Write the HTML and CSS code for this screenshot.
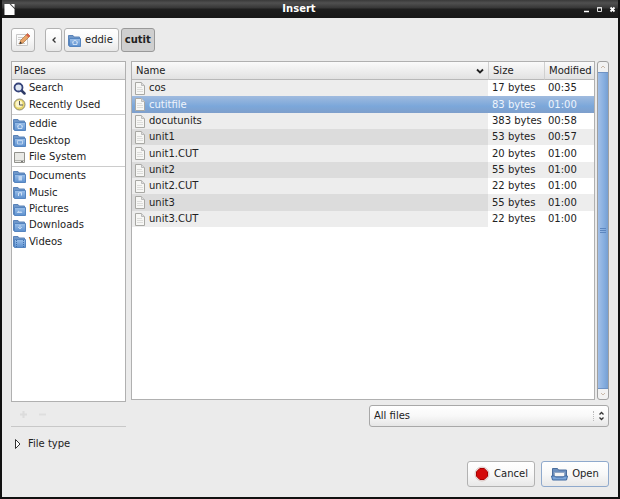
FILE: index.html
```html
<!DOCTYPE html>
<html lang="en">
<head>
    <meta charset="UTF-8">
    <meta name="viewport" content="width=device-width, initial-scale=1.0">
    <title>Insert</title>
    <link rel="stylesheet" href="styles.css">
</head>
<body>
    <!-- Shared icons -->
    <svg class="icon-defs" aria-hidden="true">
        <linearGradient id="blue" x1="0" y1="0" x2="0" y2="1">
            <stop offset="0" stop-color="#9cc0ea"/>
            <stop offset="1" stop-color="#5b8fce"/>
        </linearGradient>
        <symbol id="folder" viewBox="0 0 13 13">
            <path d="M.5 11.500v-10h4.500l1 1.500h5.500v8.500z" fill="#6f97c9" stroke="#5a83b8"/>
            <path d="M1.500 4.500h11v8h-11z" fill="url(#blue)" stroke="#5585c0"/>
        </symbol>
        <symbol id="file" viewBox="0 0 12 13">
            <path d="M1.500.5h6l3 3v9h-9z" fill="#f7f7f5" stroke="#a8a8a4"/>
            <path d="M7.500.5v3h3" fill="#ddd" stroke="#bbb"/>
            <path d="M3 5.500h5M3 7.500h6M3 9.500h6" stroke="#dcdcda"/>
        </symbol>
    </svg>

    <div class="window">
        <header class="titlebar">
            <svg class="app-icon" viewBox="0 0 12 13" aria-hidden="true"><path d="M.5.5H6L11.500 6v6.500H.5z" fill="#fff"/><path d="M7.500.5h4V4.500z" fill="#fff"/></svg>
            <h1>Insert</h1>
            <div class="window-controls">
                <button aria-label="Minimize"><svg viewBox="0 0 7 7"><path d="M1 5.500h5" stroke="#fff" stroke-width="1.500"/></svg></button>
                <button aria-label="Maximize"><svg viewBox="0 0 7 7"><path d="M1.500 1.500h4v4h-4zM1 2h5" fill="none" stroke="#ddd"/></svg></button>
                <button aria-label="Close"><svg viewBox="0 0 7 7"><path d="M1.500 1.500l4 4M5.500 1.500l-4 4" stroke="#fff" stroke-width="1.800"/></svg></button>
            </div>
        </header>

        <main>
            <nav class="toolbar" aria-label="Path">
                <button class="btn btn-edit" aria-label="Type a file name">
                    <svg viewBox="0 0 16 16">
                        <path d="M1.500 2.500h11v11h-11z" fill="#fafafa" stroke="#c8c8c8"/>
                        <path d="M3 5.500h5M3 7.500h4M3 11.500h7" stroke="#ccc"/>
                        <path d="M4.500 12l1-3.500 7-7 2.500 2.500-7 7z" fill="#e8a468" stroke="#a8703c" stroke-width=".7"/>
                        <path d="M11 3l1.500-1.500L15 4l-1.500 1.500z" fill="#d6604c"/>
                        <path d="M4.500 12l.8-2.500 1.700 1.700z" fill="#333"/>
                    </svg>
                </button>
                <button class="btn btn-back" aria-label="Back"><svg viewBox="0 0 6 8"><path d="M4.500 1.500L2 4l2.500 2.500" fill="none" stroke="#333" stroke-width="1.300"/></svg></button>
                <button class="btn btn-path">
                    <svg viewBox="0 0 13 13"><use href="#folder"/><path d="M4 8.500l3-2.500 3 2.500M5 8v2.500h4V8" fill="none" stroke="#d5e4f6" stroke-width=".9"/></svg>
                    eddie
                </button>
                <button class="btn btn-path current">cutit</button>
            </nav>

            <div class="panes">
                <section class="side">
                    <div class="places">
                        <h2>Places</h2>
                        <ul>
                            <li><button><svg viewBox="0 0 13 13"><path d="M8.500 8.500l3 3" stroke="#2d3a66" stroke-width="2.500" stroke-linecap="round"/><circle cx="5.500" cy="5.500" r="4" fill="#dfe7f3" stroke="#35437a" stroke-width="1.800"/></svg>Search</button></li>
                            <li><button><svg viewBox="0 0 13 13"><circle cx="6.500" cy="6.500" r="5.500" fill="#e8d66a" stroke="#8d8a72"/><circle cx="6" cy="6" r="3.500" fill="#fbf5cd"/><path d="M6.500 3v4H10" fill="none" stroke="#555"/></svg>Recently Used</button></li>
                        </ul>
                        <ul>
                            <li><button><svg viewBox="0 0 13 13"><use href="#folder"/><path d="M4 8.500l3-2.500 3 2.500M5 8v2.500h4V8" fill="none" stroke="#d5e4f6" stroke-width=".9"/></svg>eddie</button></li>
                            <li><button><svg viewBox="0 0 13 13"><use href="#folder"/><path d="M4.500 6.500h5v3.500h-5z" fill="none" stroke="#c4d9f2" stroke-width=".9"/></svg>Desktop</button></li>
                            <li><button><svg viewBox="0 0 13 13"><path d="M1.500 1.500h10v10h-10z" fill="#e9e9e5" stroke="#92928c"/><path d="M2 9.500h9" stroke="#b5b5b0"/><path d="M8 10.500h2" stroke="#777"/></svg>File System</button></li>
                        </ul>
                        <ul>
                            <li><button><svg viewBox="0 0 13 13"><use href="#folder"/><path d="M5.500 6h3.500v4.500H5.500z" fill="#c0d7f2"/></svg>Documents</button></li>
                            <li><button><svg viewBox="0 0 13 13"><use href="#folder"/><path d="M5.500 10V7l3-.5V9.500" fill="none" stroke="#d0e1f5"/></svg>Music</button></li>
                            <li><button><svg viewBox="0 0 13 13"><use href="#folder"/><path d="M3.500 10l2-2.500 1.500 1.500 1-1 1.500 2z" fill="#c4d9f2"/></svg>Pictures</button></li>
                            <li><button><svg viewBox="0 0 13 13"><use href="#folder"/><path d="M7 6v3M5 8l2 2 2-2" fill="none" stroke="#c0d7f2"/></svg>Downloads</button></li>
                            <li><button><svg viewBox="0 0 13 13"><use href="#folder"/><path d="M3.500 5v7M10.500 5v7" stroke="#3e70ad" stroke-dasharray="1 1"/></svg>Videos</button></li>
                        </ul>
                    </div>
                    <div class="place-actions">
                        <button aria-label="Add bookmark" disabled><svg viewBox="0 0 9 9"><path d="M4.500 1v7M1 4.500h7" stroke="#dcdcdc" stroke-width="2"/></svg></button>
                        <button aria-label="Remove bookmark" disabled><svg viewBox="0 0 9 9"><path d="M1 4.500h7" stroke="#dedede" stroke-width="2"/></svg></button>
                    </div>
                </section>

                <section class="browser">
                    <div class="listing">
                        <div class="files">
                            <table>
                                <thead>
                                    <tr>
                                        <th class="name" aria-sort="ascending"><button>Name<svg viewBox="0 0 8 6"><path d="M1 1.500l3 3 3-3" fill="none" stroke="#222" stroke-width="1.800"/></svg></button></th>
                                        <th class="size">Size</th>
                                        <th class="modified">Modified</th>
                                    </tr>
                                </thead>
                                <tbody>
                                    <tr><td><svg><use href="#file"/></svg>cos</td><td>17 bytes</td><td>00:35</td></tr>
                                    <tr class="selected"><td><svg><use href="#file"/></svg>cutitfile</td><td>83 bytes</td><td>01:00</td></tr>
                                    <tr><td><svg><use href="#file"/></svg>docutunits</td><td>383 bytes</td><td>00:58</td></tr>
                                    <tr><td><svg><use href="#file"/></svg>unit1</td><td>53 bytes</td><td>00:57</td></tr>
                                    <tr><td><svg><use href="#file"/></svg>unit1.CUT</td><td>20 bytes</td><td>01:00</td></tr>
                                    <tr><td><svg><use href="#file"/></svg>unit2</td><td>55 bytes</td><td>01:00</td></tr>
                                    <tr><td><svg><use href="#file"/></svg>unit2.CUT</td><td>22 bytes</td><td>01:00</td></tr>
                                    <tr><td><svg><use href="#file"/></svg>unit3</td><td>55 bytes</td><td>01:00</td></tr>
                                    <tr><td><svg><use href="#file"/></svg>unit3.CUT</td><td>22 bytes</td><td>01:00</td></tr>
                                </tbody>
                            </table>
                        </div>
                        <div class="scrollbar">
                            <button aria-label="Scroll up"><svg viewBox="0 0 6 4"><path d="M1 3l2-2 2 2" fill="none" stroke="#c9b8a8"/></svg></button>
                            <div class="thumb"><svg viewBox="0 0 6 7"><path d="M0 1.500h6M0 3.500h6M0 5.500h6" stroke="#5c86bf"/></svg></div>
                            <button aria-label="Scroll down"><svg viewBox="0 0 6 4"><path d="M1 1l2 2 2-2" fill="none" stroke="#c9b8a8"/></svg></button>
                        </div>
                    </div>
                    <div class="filter">
                        <select aria-label="File filter">
                            <option>All files</option>
                        </select>
                        <svg viewBox="0 0 6 10" aria-hidden="true"><path d="M1 3.500l2-2 2 2M1 6.500l2 2 2-2" fill="none" stroke="#333" stroke-width="1.300"/></svg>
                    </div>
                </section>
            </div>

            <button class="expander" aria-expanded="false"><svg viewBox="0 0 8 12"><path d="M1.500 1.500L6 6l-4.500 4.500z" fill="#fff" stroke="#333"/></svg>File type</button>

            <footer>
                <button class="btn">
                    <svg viewBox="0 0 16 16"><circle cx="8" cy="8" r="7" fill="#f6e4e2" stroke="#d8c4c2"/><path d="M5.800 2.500h4.400l3.300 3.300v4.400l-3.300 3.300H5.800l-3.300-3.300V5.800z" fill="#d40a0a" stroke="#a80000"/></svg>
                    Cancel
                </button>
                <button class="btn btn-default">
                    <svg class="open-icon" viewBox="0 0 17 14"><path d="M1.500 12V1.500h5l1 1.500h8v9z" fill="#6c8fbe" stroke="#4a6d9c"/><path d="M3.500 5.500h10v4h-10z" fill="#f4f4f4" stroke="#93a8c4"/><path d="M.5 9h3l1 1h8l1-1h3l-1 4h-14z" fill="#7ba5d8" stroke="#3f69a0"/></svg>
                    Open
                </button>
            </footer>
        </main>
    </div>
</body>
</html>
```
FILE: styles.css
```css
* {
    box-sizing: border-box;
}

body {
    margin: 0;
    font-family: "DejaVu Sans", Verdana, sans-serif;
    font-size: 10px;
    line-height: 16px;
    color: #222;
}

button,
select {
    font: inherit;
    color: inherit;
    margin: 0;
    padding: 0;
    border: none;
    background: none;
}

svg {
    flex: none;
}

.icon-defs {
    display: block;
    width: 0;
    height: 0;
}

.window {
    display: flex;
    flex-direction: column;
    min-height: 100vh;
    border: 2px solid #111;
    border-top: none;
    background-color: #ebebeb;
}

/* Title bar */
.titlebar {
    display: flex;
    align-items: center;
    height: 18px;
    padding: 0 2px;
    background: linear-gradient(#3a3a3a 0, #505050 3px, #363636 8px, #1e1e1e 9px, #181818 100%);
    color: #fff;
}

.titlebar h1 {
    flex: 1;
    margin: 0;
    font-size: 10px;
    line-height: 16px;
    text-align: center;
}

.app-icon {
    width: 11px;
    height: 13px;
}

.window-controls {
    display: flex;
    gap: 6px;
}

.window-controls button,
.window-controls svg {
    display: block;
    width: 7px;
    height: 7px;
}

main {
    flex: 1;
    display: flex;
    flex-direction: column;
    padding: 10px 9px;
}

/* Buttons */
.btn {
    display: flex;
    align-items: center;
    justify-content: center;
    gap: 4px;
    height: 26px;
    border: 1px solid #b2b2b2;
    border-radius: 3px;
    background: linear-gradient(#fff, #f8f8f8 50%, #e8e8e8);
}

.toolbar {
    display: flex;
    gap: 2px;
    margin-bottom: 9px;
}

.toolbar .btn {
    height: 24px;
}

.btn-edit {
    width: 24px;
    margin-right: 8px;
}

.btn-edit svg {
    width: 16px;
    height: 16px;
}

.btn-back {
    width: 17px;
}

.btn-back svg {
    width: 6px;
    height: 8px;
}

.btn-path {
    padding: 0 5px 0 3px;
}

.btn-path svg {
    width: 13px;
    height: 13px;
}

.toolbar .current {
    padding: 0 3px;
    border-color: #999;
    background: #cfcfcf;
    font-weight: bold;
}

/* Panes */
.panes {
    flex: 1;
    display: flex;
    gap: 5px;
}

.side {
    width: 115px;
    display: flex;
    flex-direction: column;
    border-bottom: 1px solid #c8c8c8;
}

.places,
.files {
    flex: 1;
    border: 1px solid #b0b0b0;
    background-color: #fff;
}

.places h2,
th {
    height: 18px;
    border-bottom: 1px solid #b8b8b8;
    background: linear-gradient(#fafafa, #e2e2e2);
    font-size: 10px;
    font-weight: normal;
    line-height: 17px;
}

.places h2 {
    margin: 0;
    padding-left: 2px;
}

.places ul {
    margin: 0;
    padding: 0;
    list-style: none;
}

.places ul + ul {
    margin-top: 1px;
    padding-top: 1px;
    border-top: 1px solid #ccc;
}

.places button {
    display: flex;
    align-items: center;
    gap: 3px;
    width: 100%;
    padding-left: 1px;
    white-space: nowrap;
}

.places svg {
    width: 13px;
    height: 13px;
}

.places li:nth-child(3n+2) button {
    height: 17px;
}

.place-actions {
    display: flex;
    align-items: center;
    gap: 10px;
    height: 24px;
    padding-left: 8px;
}

.place-actions svg {
    display: block;
    width: 9px;
    height: 9px;
}

.browser {
    flex: 1;
    display: flex;
    flex-direction: column;
    gap: 5px;
}

.listing {
    flex: 1;
    display: flex;
    gap: 2px;
}

table {
    width: 100%;
    table-layout: fixed;
    border-collapse: separate;
    border-spacing: 0;
}

th,
td {
    padding: 0 0 0 4px;
    text-align: left;
    white-space: nowrap;
}

.size {
    width: 56px;
}

.modified {
    width: 50px;
}

th + th {
    border-left: 1px solid #d0d0d0;
}

th button {
    display: flex;
    align-items: center;
    justify-content: space-between;
    width: 100%;
    padding-right: 4px;
}

th svg {
    width: 8px;
    height: 6px;
}

td {
    height: 16px;
}

tr:nth-child(3n+2) td {
    height: 17px;
}

td:first-child {
    padding-left: 2px;
    background-color: #ededed;
}

tr:nth-child(even) td {
    background-color: #ededed;
}

tr:nth-child(even) td:first-child {
    background-color: #dcdcdc;
}

tbody .selected td,
tbody .selected td:first-child {
    background: linear-gradient(#a0bbdf, #7ba7da 60%, #7f9fcb);
    color: #eef4fc;
}

td svg {
    width: 12px;
    height: 13px;
    margin-right: 3px;
    vertical-align: middle;
}

/* Scrollbar */
.scrollbar {
    display: flex;
    flex-direction: column;
    width: 12px;
    border: 1px solid #a0a0a0;
    border-radius: 3px;
    background-color: #f2f2f2;
}

.scrollbar button {
    display: flex;
    align-items: center;
    justify-content: center;
    height: 10px;
}

.scrollbar button svg {
    width: 6px;
    height: 4px;
}

.thumb {
    flex: 1;
    display: flex;
    align-items: center;
    justify-content: center;
    border: 1px solid #6f93c4;
    border-width: 1px 0;
    background: linear-gradient(to right, #a3c0e8, #86aedf 60%, #769fd2);
}

.thumb svg {
    width: 6px;
    height: 7px;
}

/* File filter */
.filter {
    align-self: flex-end;
    display: grid;
    align-items: center;
    width: 50%;
    min-width: 240px;
}

.filter select,
.filter svg {
    grid-area: 1 / 1;
}

.filter select {
    appearance: none;
    height: 22px;
    padding-left: 4px;
    border: 1px solid #a8a8a8;
    border-radius: 3px;
    background: linear-gradient(#fff, #f8f8f8 50%, #e6e6e6);
}

.filter svg {
    justify-self: end;
    width: 16px;
    height: 10px;
    border-left: 1px dotted #bbb;
    pointer-events: none;
}

.expander {
    align-self: flex-start;
    display: flex;
    align-items: center;
    gap: 6px;
    margin: 9px 0 9px 3px;
}

.expander svg {
    width: 8px;
    height: 12px;
}

footer {
    display: flex;
    justify-content: flex-end;
    gap: 6px;
}

footer .btn {
    min-width: 68px;
}

footer svg {
    width: 16px;
    height: 16px;
}

footer .open-icon {
    width: 17px;
    height: 14px;
}

.btn-default {
    border-color: #8fa9cc;
}
```
